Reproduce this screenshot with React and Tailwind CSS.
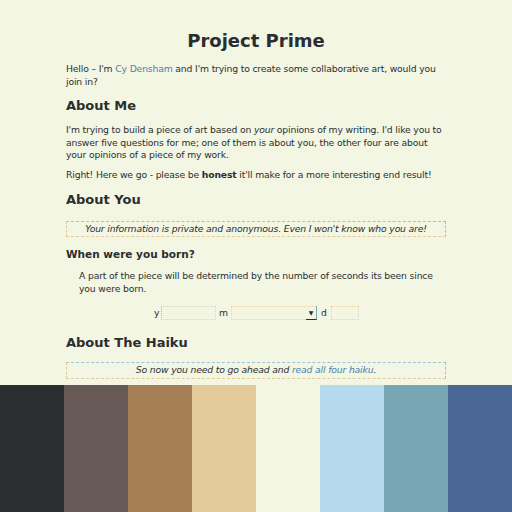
export default function App() {
  const palette = ["#2a2e30", "#675a56", "#a57f55", "#e2ca9a", "#f3f6e3", "#b5daf0", "#77a6b5", "#4b6795"];
  return (
    <div className="h-[512px] overflow-hidden bg-[#f3f6e3] text-[#2a2e30] flex flex-col" style={{ fontFamily: "Verdana, 'DejaVu Sans', sans-serif" }}>
      <div className="w-[380px] mx-auto pt-[29px] text-[9.25px] leading-[12.5px] tracking-[-0.16px]">
        <h1 className="text-center text-[18px] font-bold leading-[24px] tracking-normal">Project Prime</h1>
        <p className="mt-[10px]">
          Hello – I'm <span className="text-[#4a82b0]">Cy Densham</span> and I'm trying to create some collaborative art, would you join in?
        </p>
        <h2 className="mt-[10px] text-[13px] font-bold leading-[16px] tracking-normal">About Me</h2>
        <p className="mt-[10px]">
          I'm trying to build a piece of art based on <em>your</em> opinions of my writing. I'd like you to answer five questions for me; one of them is about you, the other four are about your opinions of a piece of my work.
        </p>
        <p className="mt-[7px]">
          Right! Here we go - please be <strong>honest</strong> it'll make for a more interesting end result!
        </p>
        <h2 className="mt-[11px] text-[13px] font-bold leading-[16px] tracking-normal">About You</h2>
        <div className="mt-[13px] h-[16px] flex items-center justify-center border border-dashed border-[#e2ca9a] border-t-[#9cc3d8] border-r-[#9cc3d8] italic">
          Your information is private and anonymous. Even I won't know who you are!
        </div>
        <h3 className="mt-[10px] text-[10.5px] font-bold leading-[14px] tracking-normal">When were you born?</h3>
        <p className="mt-[9px] pl-[13px]">
          A part of the piece will be determined by the number of seconds its been since you were born.
        </p>
        <div className="mt-[11px] h-[14px] flex items-center pl-[88px]">
          <span className="w-[7px]">y</span>
          <div className="w-[55px] h-[14px] border border-dotted border-[#e8d3a8] border-l-[#9cc3d8]"></div>
          <span className="ml-[3px] w-[12px]">m</span>
          <div className="w-[86px] h-[14px] border border-dotted border-[#e8d3a8] flex justify-end">
            <div className="h-[14px] w-[11px] -mt-px -mr-px flex items-center justify-center border-r border-b border-r-[#77a6b5] border-b-[#2a2e30]">
              <span className="text-[6px] leading-none">▼</span>
            </div>
          </div>
          <span className="ml-[4px] w-[10px]">d</span>
          <div className="w-[28px] h-[14px] border border-dotted border-[#e8d3a8]"></div>
        </div>
        <h2 className="mt-[15px] text-[13px] font-bold leading-[16px] tracking-normal">About The Haiku</h2>
        <div className="mt-[11px] h-[17px] flex items-center justify-center border border-dashed border-[#e2ca9a] border-t-[#9cc3d8] border-r-[#9cc3d8] italic">
          <span>So now you need to go ahead and <span className="text-[#4a82b0]">read all four haiku</span>.</span>
        </div>
      </div>
      <div className="mt-auto flex h-[127px] shrink-0">
        {palette.map((c) => (
          <div key={c} className="flex-1" style={{ backgroundColor: c }}></div>
        ))}
      </div>
    </div>
  );
}
